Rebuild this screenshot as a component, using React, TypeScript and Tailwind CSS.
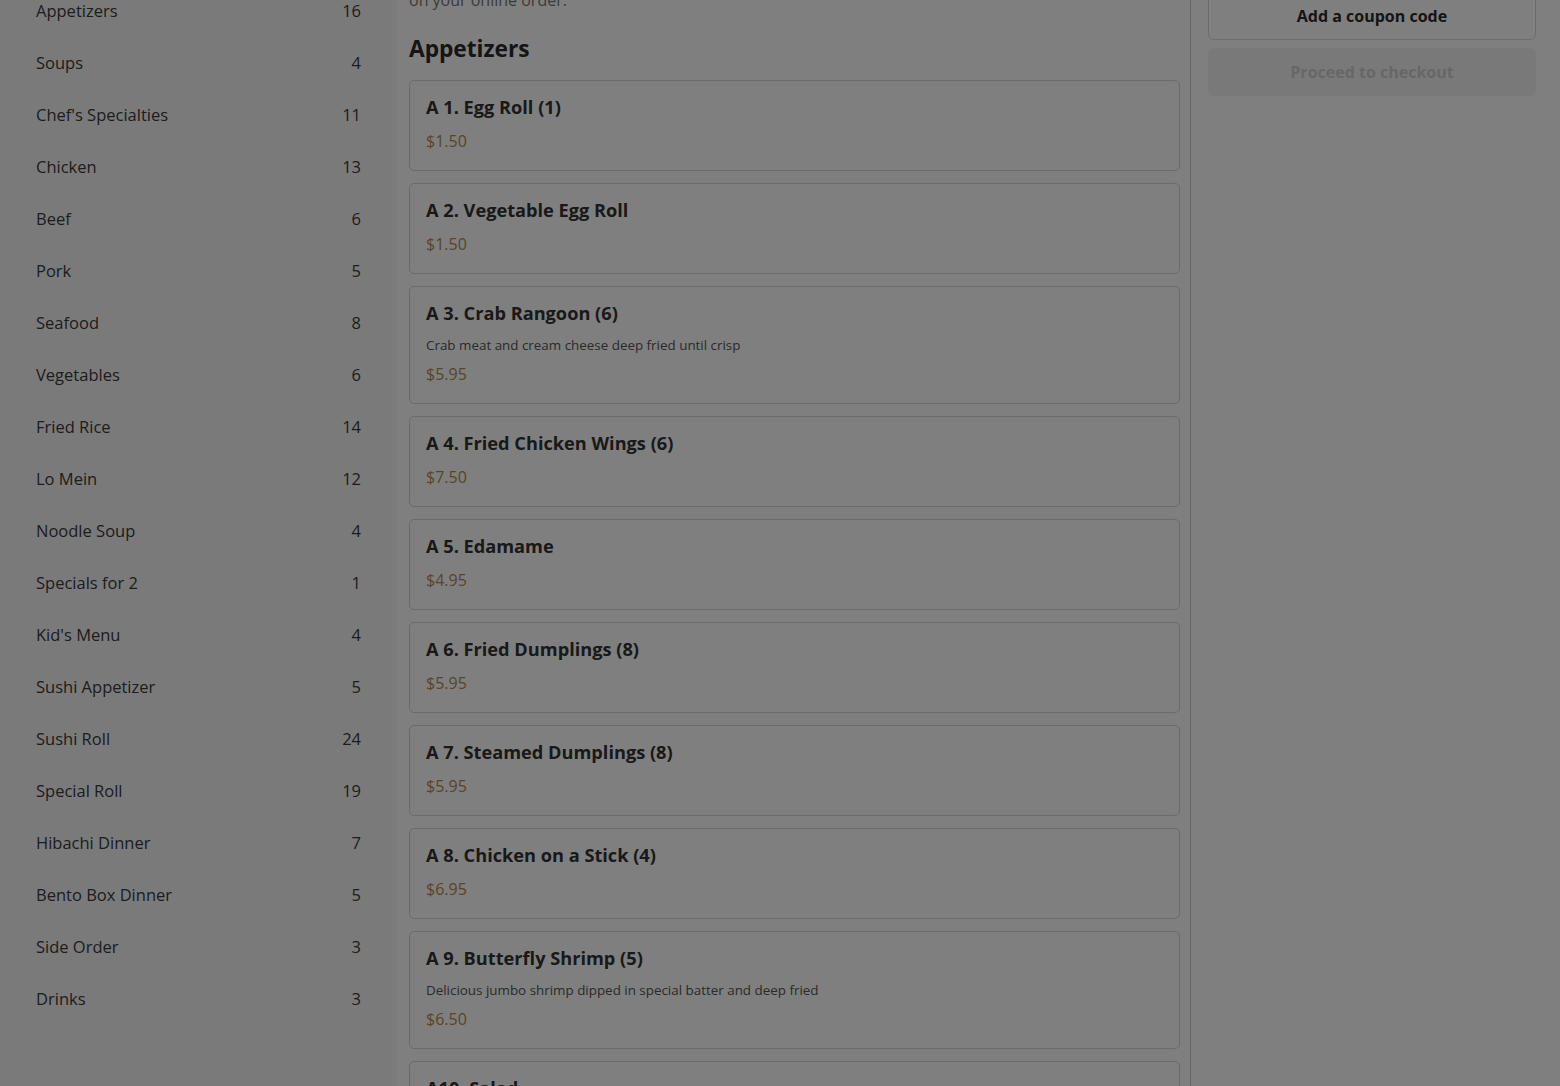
import React from "react";

type Category = { name: string; count: number };
type Item = { title: string; price: string; desc?: string };

const categories: Category[] = [
  { name: "Appetizers", count: 16 },
  { name: "Soups", count: 4 },
  { name: "Chef's Specialties", count: 11 },
  { name: "Chicken", count: 13 },
  { name: "Beef", count: 6 },
  { name: "Pork", count: 5 },
  { name: "Seafood", count: 8 },
  { name: "Vegetables", count: 6 },
  { name: "Fried Rice", count: 14 },
  { name: "Lo Mein", count: 12 },
  { name: "Noodle Soup", count: 4 },
  { name: "Specials for 2", count: 1 },
  { name: "Kid's Menu", count: 4 },
  { name: "Sushi Appetizer", count: 5 },
  { name: "Sushi Roll", count: 24 },
  { name: "Special Roll", count: 19 },
  { name: "Hibachi Dinner", count: 7 },
  { name: "Bento Box Dinner", count: 5 },
  { name: "Side Order", count: 3 },
  { name: "Drinks", count: 3 },
];

const items: Item[] = [
  { title: "A 1. Egg Roll (1)", price: "$1.50" },
  { title: "A 2. Vegetable Egg Roll", price: "$1.50" },
  {
    title: "A 3. Crab Rangoon (6)",
    price: "$5.95",
    desc: "Crab meat and cream cheese deep fried until crisp",
  },
  { title: "A 4. Fried Chicken Wings (6)", price: "$7.50" },
  { title: "A 5. Edamame", price: "$4.95" },
  { title: "A 6. Fried Dumplings (8)", price: "$5.95" },
  { title: "A 7. Steamed Dumplings (8)", price: "$5.95" },
  { title: "A 8. Chicken on a Stick (4)", price: "$6.95" },
  {
    title: "A 9. Butterfly Shrimp (5)",
    price: "$6.50",
    desc: "Delicious jumbo shrimp dipped in special batter and deep fried",
  },
  { title: "A10. Salad", price: "$3.95" },
];

function MenuCard({ item }: { item: Item }) {
  return (
    <button
      type="button"
      className="w-full text-left border border-[#d4d4d4] rounded-[5px] bg-white px-4 pt-[15px] pb-[19px] flex flex-col"
    >
      <span className="text-[18.2px] leading-[22px] font-bold text-[#333]">
        {item.title}
      </span>
      {item.desc && (
        <span className="mt-3 text-[13.4px] leading-[18px] text-[#555]">
          {item.desc}
        </span>
      )}
      <span
        className={`${item.desc ? "mt-[10px]" : "mt-[13px]"} text-[16px] leading-[20px] text-[#b08a52]`}
      >
        {item.price}
      </span>
    </button>
  );
}

export default function App() {
  return (
    <div className="relative h-[1086px] overflow-hidden bg-white font-['Open_Sans','Liberation_Sans',sans-serif]">
      <div className="flex h-full">
        {/* categories */}
        <aside className="w-[397px] shrink-0 bg-[#f5f5f5] px-9">
          <ul className="-mt-[15px]">
            {categories.map((c) => (
              <li
                key={c.name}
                className="h-[52px] flex items-center justify-between text-[16.5px] text-[#3a3a3a]"
              >
                <span>{c.name}</span>
                <span>{c.count}</span>
              </li>
            ))}
          </ul>
        </aside>

        {/* menu */}
        <main className="flex-1 pl-3 pr-[10px]">
          <p className="-mt-[12px] text-[16px] leading-[24px] text-[#767676]">
            on your online order.
          </p>
          <h2 className="mt-[21px] text-[22.7px] leading-[32px] font-bold text-[#2a2a2a]">
            Appetizers
          </h2>
          <div className="mt-[15px] flex flex-col gap-3">
            {items.map((it) => (
              <MenuCard key={it.title} item={it} />
            ))}
          </div>
        </main>

        {/* cart */}
        <aside className="w-[370px] shrink-0 border-l border-[#c8c8c8] pl-[17px] pr-6">
          <div className="-mt-2 flex flex-col gap-2">
            <button
              type="button"
              className="h-12 rounded-md border border-[#d9d9d9] bg-white text-[16px] font-bold text-[#2a2a2a]"
            >
              Add a coupon code
            </button>
            <button
              type="button"
              disabled
              className="h-12 rounded-md bg-[#f3f3f3] text-[16px] font-bold text-[#cfcfcf]"
            >
              Proceed to checkout
            </button>
          </div>
        </aside>
      </div>

      {/* modal backdrop */}
      <div className="fixed inset-0 bg-black/50" />
    </div>
  );
}
